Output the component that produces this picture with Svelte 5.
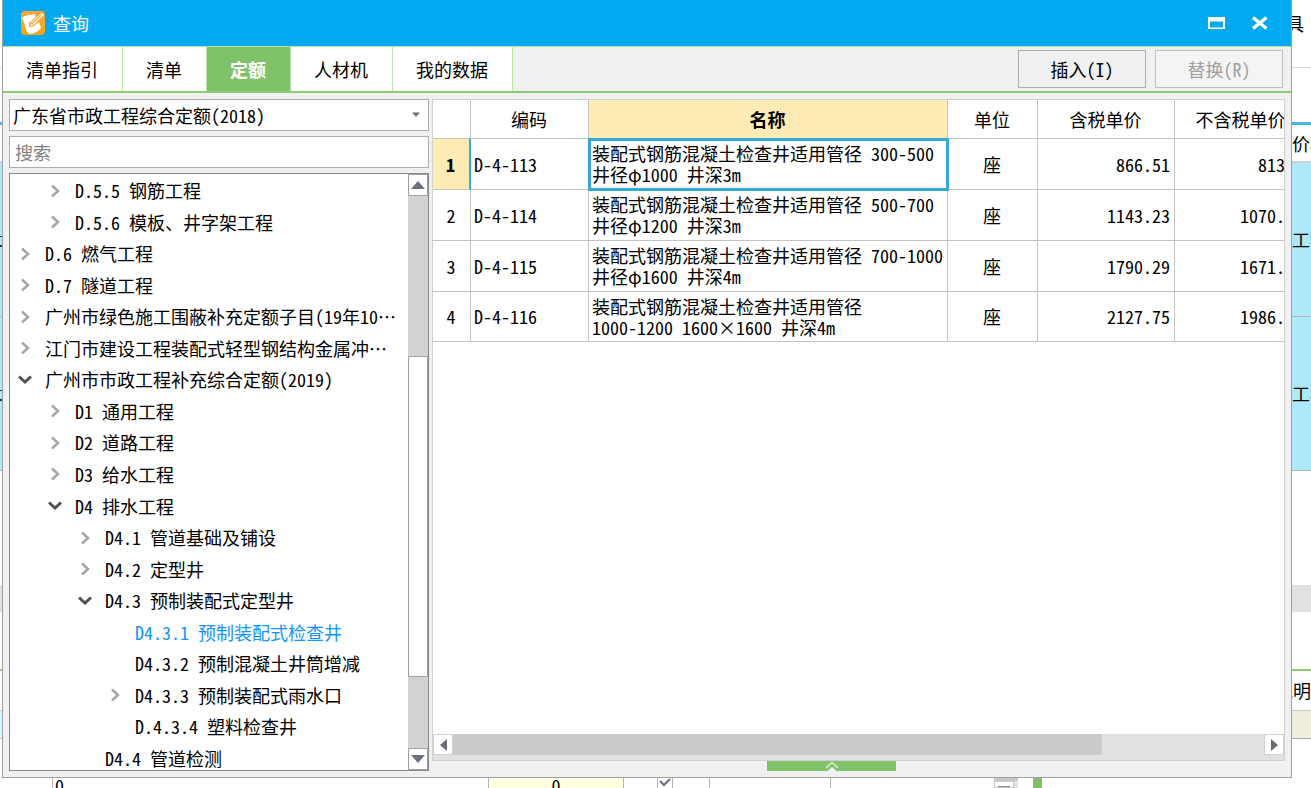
<script lang="ts">
  interface TreeNode {
    level: number;
    state: "open" | "closed" | "leaf";
    label: string;
  }

  interface QuotaRow {
    code: string;
    name: string;
    unit: string;
    taxed: string;
    untaxed: string;
  }

  const tabs = ["清单指引", "清单", "定额", "人材机", "我的数据"];
  const library = "广东省市政工程综合定额(2018)";

  const nodes: TreeNode[] = [
    { level: 1, state: "closed", label: "D.5.5 钢筋工程" },
    { level: 1, state: "closed", label: "D.5.6 模板、井字架工程" },
    { level: 0, state: "closed", label: "D.6 燃气工程" },
    { level: 0, state: "closed", label: "D.7 隧道工程" },
    { level: 0, state: "closed", label: "广州市绿色施工围蔽补充定额子目(19年10⋯" },
    { level: 0, state: "closed", label: "江门市建设工程装配式轻型钢结构金属冲⋯" },
    { level: 0, state: "open", label: "广州市市政工程补充综合定额(2019)" },
    { level: 1, state: "closed", label: "D1 通用工程" },
    { level: 1, state: "closed", label: "D2 道路工程" },
    { level: 1, state: "closed", label: "D3 给水工程" },
    { level: 1, state: "open", label: "D4 排水工程" },
    { level: 2, state: "closed", label: "D4.1 管道基础及铺设" },
    { level: 2, state: "closed", label: "D4.2 定型井" },
    { level: 2, state: "open", label: "D4.3 预制装配式定型井" },
    { level: 3, state: "leaf", label: "D4.3.1 预制装配式检查井" },
    { level: 3, state: "leaf", label: "D4.3.2 预制混凝土井筒增减" },
    { level: 3, state: "closed", label: "D4.3.3 预制装配式雨水口" },
    { level: 3, state: "leaf", label: "D.4.3.4 塑料检查井" },
    { level: 2, state: "leaf", label: "D4.4 管道检测" },
  ];

  const rows: QuotaRow[] = [
    { code: "D-4-113", name: "装配式钢筋混凝土检查井适用管径 300-500\n井径φ1000 井深3m", unit: "座", taxed: "866.51", untaxed: "813.4" },
    { code: "D-4-114", name: "装配式钢筋混凝土检查井适用管径 500-700\n井径φ1200 井深3m", unit: "座", taxed: "1143.23", untaxed: "1070.52" },
    { code: "D-4-115", name: "装配式钢筋混凝土检查井适用管径 700-1000\n井径φ1600 井深4m", unit: "座", taxed: "1790.29", untaxed: "1671.34" },
    { code: "D-4-116", name: "装配式钢筋混凝土检查井适用管径\n1000-1200 1600×1600 井深4m", unit: "座", taxed: "2127.75", untaxed: "1986.21" },
  ];

  let activeTab = "定额";
  let selectedNode = "D4.3.1 预制装配式检查井";
  let selectedRow = 0;
  let keyword = "";
</script>

<div class="app">
  <div class="edge left">
    <div class="band top"></div>
    <div class="band head"></div>
    <div class="band cyan"></div>
    <div class="band cyan"></div>
    <div class="band blank"></div>
    <div class="band grey"></div>
    <div class="band gap"></div>
    <div class="band note"></div>
    <div class="band pale"></div>
  </div>

  <main class="dialog">
    <header class="titlebar">
      <svg class="logo" viewBox="0 0 24 24" aria-hidden="true">
        <defs>
          <linearGradient id="logo-fill" x1="0" y1="0" x2="0" y2="1">
            <stop offset="0" stop-color="#f5a83c" />
            <stop offset="1" stop-color="#fda50c" />
          </linearGradient>
        </defs>
        <rect width="24" height="24" rx="4" fill="url(#logo-fill)" />
        <path d="M1 7 Q3 4 6 4.500 L13 3 L15 6 L8 12 L8 16 L13 15 L18 11 L20 17 Q18 20 11 23 Q6 23.500 5 18 L3 11 Z" fill="#fff" />
        <path d="M8 16 L10 11 L20.500 1.500 L23.500 4 L13 14 Z" fill="#fff" stroke="#f7a62e" stroke-width="1" />
        <path d="M10.500 13 L20.500 4" stroke="#f7a62e" stroke-width="1.200" />
      </svg>
      <h1>查询</h1>
      <button class="win" aria-label="最大化">
        <svg width="18" height="14" viewBox="0 0 18 14"><path d="M1 1H18V13H1Z M3 5.500V11.500H16V5.500Z" fill="#fff" fill-rule="evenodd" /></svg>
      </button>
      <button class="win" aria-label="关闭">
        <svg width="18" height="14" viewBox="0 0 18 14"><path d="M2 1.500 L15.500 12.500 M15.500 1.500 L2 12.500" stroke="#fff" stroke-width="3.500" /></svg>
      </button>
    </header>

    <div class="toolbar">
      <nav class="tabs">
        {#each tabs as tab}
          <button class:active={tab === activeTab} on:click={() => (activeTab = tab)}>{tab}</button>
        {/each}
      </nav>
      <div class="actions">
        <button>插入(I)</button>
        <button disabled>替换(R)</button>
      </div>
    </div>

    <div class="content">
      <section class="side">
        <div class="picker">
          <select aria-label="定额库">
            <option>{library}</option>
          </select>
          <svg width="10" height="6" viewBox="0 0 10 6"><path d="M1 0.500H9L5 5Z" fill="#6b6f80" /></svg>
        </div>
        <input class="search" type="text" placeholder="搜索" aria-label="搜索" bind:value={keyword} />

        <div class="tree">
          <div class="viewport">
            <ul>
              {#each nodes as node}
                <li class="level{node.level}">
                  <span class="toggle">
                    {#if node.state === "closed"}
                      <svg width="14" height="14" viewBox="0 0 14 14"><path d="M4 1.500 L10 7 L4 12.500" fill="none" stroke="#a6a6a6" stroke-width="2.500" /></svg>
                    {:else if node.state === "open"}
                      <svg width="14" height="14" viewBox="0 0 14 14"><path d="M1 3.500 L7 9 L13 3.500" fill="none" stroke="#505050" stroke-width="3" /></svg>
                    {/if}
                  </span>
                  <button class:current={node.label === selectedNode} on:click={() => (selectedNode = node.label)}>{node.label}</button>
                </li>
              {/each}
            </ul>
          </div>
          <div class="vscroll">
            <button aria-label="向上滚动"><svg width="14" height="8" viewBox="0 0 14 8"><path d="M0 8H14L7 0Z" fill="#6b6f80" /></svg></button>
            <div class="before"></div>
            <div class="thumb"></div>
            <div class="after"></div>
            <button aria-label="向下滚动"><svg width="14" height="8" viewBox="0 0 14 8"><path d="M0 0H14L7 8Z" fill="#6b6f80" /></svg></button>
          </div>
        </div>
      </section>

      <section class="main">
        <div class="grid">
          <div class="sheet">
            <table>
              <colgroup>
                <col class="c-no" />
                <col class="c-code" />
                <col class="c-name" />
                <col class="c-unit" />
                <col class="c-taxed" />
                <col class="c-untaxed" />
              </colgroup>
              <thead>
                <tr>
                  <th></th>
                  <th>编码</th>
                  <th class="picked">名称</th>
                  <th>单位</th>
                  <th>含税单价</th>
                  <th>不含税单价</th>
                </tr>
              </thead>
              <tbody>
                {#each rows as row, i}
                  <tr class:selected={i === selectedRow} on:click={() => (selectedRow = i)}>
                    <td class="no">{i + 1}</td>
                    <td>{row.code}</td>
                    <td class="name">{row.name}</td>
                    <td class="unit">{row.unit}</td>
                    <td class="num">{row.taxed}</td>
                    <td class="num">{row.untaxed}</td>
                  </tr>
                {/each}
              </tbody>
            </table>
          </div>
          <div class="hscroll">
            <button aria-label="向左滚动"><svg width="7" height="12" viewBox="0 0 7 12"><path d="M7 0V12L0 6Z" fill="#6b6b75" /></svg></button>
            <div class="thumb"></div>
            <div class="after"></div>
            <button aria-label="向右滚动"><svg width="7" height="12" viewBox="0 0 7 12"><path d="M0 0V12L7 6Z" fill="#6b6b75" /></svg></button>
          </div>
        </div>
        <div class="drawer">
          <button aria-label="展开">
            <svg width="14" height="10" viewBox="0 0 14 10"><path d="M1 7 L7 1.500 L13 7" fill="none" stroke="#c5e6b8" stroke-width="2" /><path d="M3 10 L7 6 L11 10Z" fill="#fff" /></svg>
          </button>
        </div>
      </section>
    </div>
  </main>

  <div class="edge right">
    <div class="band top">具</div>
    <div class="band head">价格</div>
    <div class="band cyan">工程</div>
    <div class="band cyan">工程</div>
    <div class="band blank"></div>
    <div class="band grey"></div>
    <div class="band gap"></div>
    <div class="band note"><span>说明</span></div>
    <div class="band beige"></div>
  </div>

  <div class="under">
    <div class="u-index"></div>
    <div class="u-first">0</div>
    <div class="u-yellow">0</div>
    <div class="u-check">
      <svg width="16" height="10" viewBox="0 0 16 10"><path d="M0.500 0V10M15.500 0V10" stroke="#b4b4b4" /><path d="M3 3 L7 7 L13 1" fill="none" stroke="#6b6f80" stroke-width="2" /></svg>
    </div>
    <div class="u-cell"></div>
    <div class="u-wide"></div>
    <div class="u-scroll"><i></i></div>
    <div class="u-green"></div>
  </div>
</div>

<style>
  :global(body) {
    margin: 0;
    background: #fff;
  }
  .app {
    display: grid;
    grid-template-columns: 2px minmax(0, 1fr) 19px;
    grid-template-rows: minmax(0, 1fr) 10px;
    height: 100vh;
    overflow: hidden;
    background: #fff;
    color: #000;
    font-family: "Noto Sans Mono CJK SC", "Noto Sans CJK SC", monospace;
    font-size: 18px;
    line-height: 21px;
  }
  button,
  input,
  select {
    font: inherit;
    color: inherit;
    margin: 0;
    padding: 0;
    border: none;
    border-radius: 0;
    background: none;
  }
  svg {
    display: block;
  }

  /* host window around the dialog */
  .edge {
    display: flex;
    flex-direction: column;
    overflow: hidden;
    white-space: nowrap;
  }
  .band {
    box-sizing: border-box;
    flex: none;
    display: flex;
    align-items: center;
    overflow: hidden;
  }
  .band.top {
    height: 122px;
    align-items: flex-start;
    padding-top: 13px;
    background: linear-gradient(#dcdcdc, #dcdcdc) 0 67px / 100% 1px no-repeat;
  }
  .right .band.top {
    justify-content: flex-end;
    padding-right: 7px;
  }
  .band.head {
    height: 41px;
    border-top: 3px solid #45b5e6;
    border-bottom: 2px solid #d0d0d0;
  }
  .band.cyan {
    height: 154px;
    background: #aee9fb;
    border-bottom: 1px solid #b4b4b4;
  }
  .left .band.cyan {
    background:
      linear-gradient(#333, #333) 0 73px / 100% 1px no-repeat,
      linear-gradient(#333, #333) 0 82px / 100% 2px no-repeat,
      #aee9fb;
  }
  .band.blank {
    height: 114px;
  }
  .band.grey {
    height: 27px;
    background: #e1e1e1;
  }
  .band.gap {
    height: 59px;
    border-bottom: 2px solid #8cc97a;
  }
  .band.note {
    height: 40px;
    border-bottom: 1px solid #c8c8c8;
    justify-content: flex-end;
  }
  .band.beige {
    height: 28px;
    background: #efeedf;
    border-bottom: 1px solid #a8a8a8;
  }
  .band.pale {
    height: 28px;
    background: #c8faff;
    border-bottom: 1px solid #c8c8c8;
  }

  .under {
    grid-column: 1 / -1;
    display: flex;
    overflow: hidden;
    line-height: 14px;
  }
  .under > div {
    box-sizing: border-box;
    flex: none;
    border-right: 1px solid #b4b4b4;
  }
  .under .u-index {
    width: 53px;
  }
  .under .u-first {
    width: 436px;
    padding-left: 2px;
  }
  .under .u-yellow {
    width: 135px;
    background: #ffffe1;
    text-align: center;
  }
  .under .u-check {
    width: 86px;
    padding-left: 33px;
  }
  .under .u-cell {
    width: 121px;
  }
  .under .u-wide {
    width: 163px;
    border: none;
  }
  .under .u-scroll {
    width: 24px;
    border: none;
    border-top: 3px solid #c8c8c8;
    background: #e1e1e1;
  }
  .u-scroll i {
    display: block;
    box-sizing: border-box;
    width: 20px;
    height: 7px;
    border: 1px solid #c8c8c8;
    background: linear-gradient(#8c8c8c, #8c8c8c) 3px 4px / 12px 2px no-repeat #fff;
  }
  .under .u-green {
    width: 9px;
    margin-left: 15px;
    border: none;
    background: #80c269;
  }

  .dialog {
    display: flex;
    flex-direction: column;
    min-width: 0;
    background: #f0f0f0;
    border: 1px solid #a0a0a0;
    border-top: none;
  }
  .titlebar {
    display: flex;
    align-items: center;
    height: 46px;
    padding: 0 22px 0 18px;
    background: #02a9f1;
    color: #fff;
  }
  .logo {
    width: 24px;
    height: 24px;
  }
  h1 {
    flex: 1;
    margin: 0 0 0 8px;
    font-size: 18px;
    font-weight: 400;
  }
  .win {
    margin-left: 26px;
  }

  .toolbar {
    display: flex;
    justify-content: space-between;
    height: 44px;
    border-top: 1px solid #b5e8a5;
    border-bottom: 2px solid #8ccb7a;
  }
  .tabs {
    display: flex;
  }
  .tabs button {
    padding: 0 24px 0 23px;
    background: #fff;
    border-right: 1px solid #b5e8a5;
  }
  .tabs button.active {
    background: #80c269;
    color: #fff;
    font-weight: 700;
  }
  .actions {
    display: flex;
    gap: 9px;
    padding: 3px 8px 3px 0;
  }
  .actions button {
    width: 128px;
    border: 1px solid #adadad;
  }
  .actions button:disabled {
    border-color: #bfbfbf;
    background: #f4f4f4;
    color: #a0a0a0;
  }

  .content {
    flex: 1;
    display: flex;
    gap: 3px;
    min-height: 0;
    padding: 6px;
  }
  .side {
    box-sizing: border-box;
    display: flex;
    flex-direction: column;
    gap: 5px;
    width: 420px;
    flex: none;
  }
  .picker {
    display: grid;
    align-items: center;
    box-sizing: border-box;
    height: 32px;
    border: 1px solid #adadad;
    background: #fff;
  }
  .picker select {
    grid-area: 1 / 1;
    width: 100%;
    height: 30px;
    padding-left: 3px;
    appearance: none;
  }
  .picker svg {
    grid-area: 1 / 1;
    justify-self: end;
    margin-right: 7px;
    pointer-events: none;
  }
  .search {
    box-sizing: border-box;
    height: 32px;
    padding: 0 5px;
    border: 1px solid #adadad;
    background: #fff;
  }
  .search::placeholder {
    color: #808080;
    opacity: 1;
  }
  .tree {
    flex: 1;
    display: flex;
    min-height: 0;
    border: 1px solid #828790;
    background: #fff;
  }
  .viewport {
    flex: 1;
    min-width: 0;
    padding-top: 1px;
    overflow: hidden;
  }
  .tree ul {
    display: grid;
    grid-auto-rows: 1fr;
    height: calc(100% + 4px);
    margin: 0;
    padding: 0;
    list-style: none;
  }
  .tree li {
    display: flex;
    align-items: center;
    gap: 13px;
    padding-left: 8px;
    white-space: nowrap;
  }
  .tree li.level1 {
    padding-left: 38px;
  }
  .tree li.level2 {
    padding-left: 68px;
  }
  .tree li.level3 {
    padding-left: 98px;
  }
  .toggle {
    width: 14px;
    flex: none;
  }
  .tree li button.current {
    color: #1493f8;
  }
  .vscroll {
    display: flex;
    flex-direction: column;
    width: 20px;
    background: #d2d2d2;
  }
  .vscroll button,
  .vscroll .thumb {
    box-sizing: border-box;
    display: grid;
    place-items: center;
    background: #fff;
    border: 1px solid #a0a0a0;
  }
  .vscroll button {
    height: 22px;
  }
  .vscroll .before {
    flex: 160;
  }
  .vscroll .thumb {
    flex: 320;
  }
  .vscroll .after {
    flex: 71;
  }

  .main {
    flex: 1;
    display: flex;
    flex-direction: column;
    min-width: 0;
  }
  .grid {
    flex: 1;
    display: flex;
    flex-direction: column;
    min-height: 0;
    border: 1px solid #d0d0d0;
    background: #fff;
  }
  .sheet {
    flex: 1;
    overflow: hidden;
  }
  table {
    width: 875px;
    table-layout: fixed;
    border-collapse: separate;
    border-spacing: 0;
  }
  .c-no {
    width: 38px;
  }
  .c-code {
    width: 118px;
  }
  .c-name {
    width: 359px;
  }
  .c-unit {
    width: 90px;
  }
  .c-taxed {
    width: 137px;
  }
  .c-untaxed {
    width: 133px;
  }
  th,
  td {
    box-sizing: border-box;
    padding: 0 4px 0 3px;
    border-right: 1px solid #c3c3c3;
    border-bottom: 1px solid #c3c3c3;
    white-space: nowrap;
  }
  th {
    height: 39px;
    font-weight: 400;
  }
  th.picked {
    background: #ffecb5;
    font-weight: 700;
  }
  td {
    height: 51px;
  }
  tr:last-child td {
    height: 50px;
  }
  td.no,
  td.unit {
    text-align: center;
  }
  td.name {
    white-space: pre;
  }
  td.num {
    text-align: right;
  }
  .selected .no {
    background: #ffecb5;
    border-right: 2px solid #36a9d6;
    font-weight: 700;
  }
  .selected .name {
    outline: 3px solid #36a9d6;
    outline-offset: -2px;
  }
  .hscroll {
    display: flex;
    align-items: flex-start;
    height: 26px;
    background: #e1e1e1;
  }
  .hscroll button {
    box-sizing: border-box;
    display: grid;
    place-items: center;
    width: 20px;
    height: 21px;
    background: #fff;
    border: 1px solid #d0d0d0;
  }
  .hscroll .thumb {
    flex: 648;
    height: 21px;
    border-radius: 2px;
    background: #cacaca;
  }
  .hscroll .after {
    flex: 162;
  }
  .drawer {
    display: flex;
    height: 10px;
    padding-left: 335px;
  }
  .drawer button {
    display: grid;
    justify-items: center;
    width: 129px;
    background: #80c269;
    overflow: hidden;
  }
</style>
